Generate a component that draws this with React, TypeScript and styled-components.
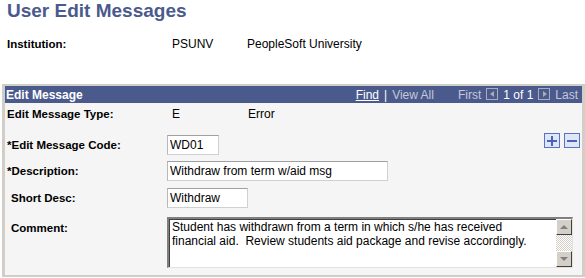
import styled, { createGlobalStyle } from 'styled-components';

const GlobalStyle = createGlobalStyle`
  html, body {
    margin: 0;
    padding: 0;
    background: #ffffff;
  }
  body {
    font-family: 'Liberation Sans', Arial, sans-serif;
    font-size: 12px;
    color: #000000;
  }
`;

function App() {
  return (
    <>
      <GlobalStyle />
      <Page>
        <Title>User Edit Messages</Title>

        <InfoRow>
          <Label>Institution:</Label>
          <Value>PSUNV</Value>
          <Value>PeopleSoft University</Value>
        </InfoRow>

        <Panel>
          <PanelHeader>
            <span className='title'>Edit Message</span>
            <Nav>
              <NavLink>Find</NavLink>
              <NavText $light>|</NavText>
              <NavText>View All</NavText>
              <NavText className='first'>First</NavText>
              <NavButton $dir='left' />
              <NavText $light>1 of 1</NavText>
              <NavButton $dir='right' />
              <NavText>Last</NavText>
            </Nav>
          </PanelHeader>

          <PanelBody>
            <Row $height={22}>
              <Label>Edit Message Type:</Label>
              <Value>E</Value>
              <Value>Error</Value>
            </Row>

            <Row $height={26} $top={7}>
              <Label>*Edit Message Code:</Label>
              <Input $width={52} defaultValue='WD01' readOnly />
              <RowButtons>
                <IconButton aria-label='add'>
                  <svg width='10' height='10' viewBox='0 0 10 10'>
                    <path d='M4 0h2v4h4v2H6v4H4V6H0V4h4z' fill='#4b63b8' />
                  </svg>
                </IconButton>
                <IconButton aria-label='remove'>
                  <svg width='10' height='10' viewBox='0 0 10 10'>
                    <path d='M0 4h10v2H0z' fill='#4b63b8' />
                  </svg>
                </IconButton>
              </RowButtons>
            </Row>

            <Row $height={26}>
              <Label>*Description:</Label>
              <Input $width={221} defaultValue='Withdraw from term w/aid msg' readOnly />
            </Row>

            <Row $height={27}>
              <Label $indent>Short Desc:</Label>
              <Input $width={81} defaultValue='Withdraw' readOnly />
            </Row>

            <CommentRow>
              <Label $indent>Comment:</Label>
              <CommentBox>
                <CommentText>
                  {'Student has withdrawn from a term in which s/he has received\nfinancial aid.  Review students aid package and revise accordingly.'}
                </CommentText>
                <ScrollBar>
                  <ScrollArrow $dir='up' />
                  <ScrollTrack />
                  <ScrollArrow $dir='down' />
                </ScrollBar>
              </CommentBox>
            </CommentRow>
          </PanelBody>
        </Panel>
      </Page>
    </>
  );
}

export default App;

const Page = styled.div`
  width: 585px;
  height: 278px;
  overflow: hidden;
`;

const Title = styled.h1`
  margin: 0;
  padding: 0 7px;
  height: 24px;
  font-size: 19px;
  line-height: 22px;
  font-weight: 700;
  color: #4b5a8c;
`;

const InfoRow = styled.div`
  display: grid;
  grid-template-columns: 165px 75px auto;
  align-items: center;
  height: 20px;
  margin-top: 10px;
  padding-left: 7px;
`;

const Label = styled.div<{ $indent?: boolean }>`
  font-size: 11.5px;
  font-weight: 700;
  padding-left: ${(p) => (p.$indent ? '4px' : '0')};
  white-space: nowrap;
`;

const Value = styled.div`
  font-size: 12px;
  white-space: nowrap;
`;

const Panel = styled.div`
  margin: 30px 0 0 2px;
  border: 3px solid #d0cec6;
  border-top-width: 2px;
  border-bottom-width: 2px;
  background: #f5f5f5;
`;

const PanelHeader = styled.div`
  display: flex;
  align-items: center;
  justify-content: space-between;
  height: 17px;
  padding: 0 4px 0 1px;
  background: #4b5a8c;
  color: #ffffff;
  .title {
    font-weight: 700;
    font-size: 12px;
  }
`;

const Nav = styled.div`
  display: flex;
  align-items: center;
  gap: 5px;
  font-size: 12px;
  .first {
    margin-left: 19px;
  }
`;

const NavLink = styled.span`
  color: #ffffff;
  text-decoration: underline;
`;

const NavText = styled.span<{ $light?: boolean }>`
  color: ${(p) => (p.$light ? '#ffffff' : '#c4c8d8')};
`;

const NavButton = styled.span<{ $dir: 'left' | 'right' }>`
  position: relative;
  width: 10px;
  height: 10px;
  border: 1px solid #a8acbc;
  margin-top: -2px;
  &::after {
    content: '';
    position: absolute;
    top: 2px;
    left: ${(p) => (p.$dir === 'left' ? '3px' : '4px')};
    border-top: 3px solid transparent;
    border-bottom: 3px solid transparent;
    ${(p) =>
      p.$dir === 'left'
        ? 'border-right: 4px solid #a8acbc;'
        : 'border-left: 4px solid #a8acbc;'}
  }
`;

const PanelBody = styled.div`
  padding: 0 2px 7px 2px;
`;

const Row = styled.div<{ $height: number; $top?: number }>`
  display: grid;
  grid-template-columns: 160px auto 1fr;
  align-items: center;
  height: ${(p) => p.$height}px;
  margin-top: ${(p) => p.$top ?? 0}px;
  &:first-child {
    grid-template-columns: 165px 76px 1fr;
  }
`;

const Input = styled.input<{ $width: number }>`
  box-sizing: border-box;
  width: ${(p) => p.$width}px;
  height: 20px;
  margin: 0;
  padding: 0 2px;
  border: 1px solid #d0d0d0;
  border-top-color: #a0a0a0;
  border-left-color: #b8b8b8;
  border-radius: 0;
  background: #ffffff;
  font-family: 'Liberation Sans', Arial, sans-serif;
  font-size: 12px;
  color: #000000;
  outline: none;
`;

const RowButtons = styled.div`
  display: flex;
  gap: 4px;
  justify-self: end;
  align-self: start;
  margin-top: 1px;
`;

const IconButton = styled.button`
  box-sizing: border-box;
  display: flex;
  align-items: center;
  justify-content: center;
  width: 16px;
  height: 15px;
  padding: 0;
  border: 1px solid #5a72c4;
  background: #dfe6f8;
`;

const CommentRow = styled.div`
  display: grid;
  grid-template-columns: 160px 406px;
  align-items: start;
  margin-top: 6px;
  > ${Label} {
    padding-top: 4px;
    line-height: 14px;
  }
`;

const CommentBox = styled.div`
  box-sizing: border-box;
  display: flex;
  height: 51px;
  background: #ffffff;
  border-top: 2px solid #808080;
  border-left: 2px solid #808080;
  border-bottom: 1px solid #e4e2dc;
  border-right: 1px solid #e4e2dc;
  box-shadow: inset 1px 1px 0 #404040;
`;

const CommentText = styled.div`
  flex: 1;
  padding: 1px 3px;
  font-size: 12px;
  line-height: 14px;
  white-space: pre-wrap;
`;

const ScrollBar = styled.div`
  display: flex;
  flex-direction: column;
  width: 16px;
`;

const ScrollArrow = styled.div<{ $dir: 'up' | 'down' }>`
  position: relative;
  box-sizing: border-box;
  width: 16px;
  height: 16px;
  background: #d4d0c8;
  border: 1px solid;
  border-color: #ffffff #404040 #404040 #ffffff;
  &::after {
    content: '';
    position: absolute;
    left: 3px;
    top: 5px;
    border-left: 4px solid transparent;
    border-right: 4px solid transparent;
    ${(p) =>
      p.$dir === 'up'
        ? 'border-bottom: 4px solid #808080;'
        : 'border-top: 4px solid #808080;'}
  }
`;

const ScrollTrack = styled.div`
  flex: 1;
  background: repeating-conic-gradient(#d4d0c8 0 25%, #ffffff 0 50%) 0 0 / 2px 2px;
`;
